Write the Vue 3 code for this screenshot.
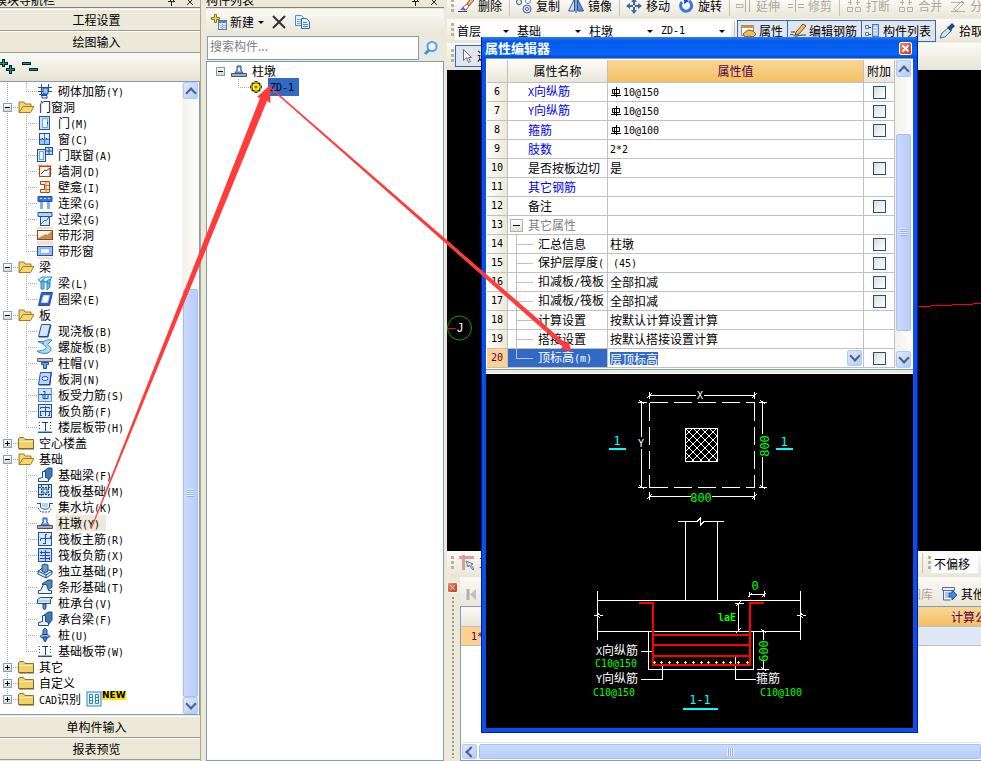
<script setup>
import { h, ref } from 'vue'

/* Splits a label into Chinese and Latin runs so that each gets its own face. */
const Mix = (props) =>
  h(
    'span',
    { class: 'mix' },
    props.t
      .split(/([\x20-\x7e]+)/)
      .filter(Boolean)
      .map((p) => (/^[\x20-\x7e]/.test(p) ? h('span', { class: 'lat' }, p) : p))
  )
Mix.props = ['t']

const B = '#1d4fb0'
const L = '#9cc4f6'
const icons = {
  folderOpen:
    '<path d="M1 13V3h5l1 2h6v3" fill="#f6d67a" stroke="#9a7a2c"/><path d="M1 13.500L5 7.500h11L12.500 13.500z" fill="#fbd568" stroke="#a07c24"/>',
  folder:
    '<path d="M.5 13.500V3.500L1.500 2.500h4l1.500 2h8.500v9z" fill="#f3cf6a" stroke="#8a7434"/><path d="M1.500 6.500h13" stroke="#fff0b8"/><path d="M1 14h15V6" fill="none" stroke="#6b5a20"/>',
  masonry: `<path d="M1 4.500h14M1 8.500h14M4.500 1v10M11.500 1v7M7.500 4v8M4 12.500h6v3M2 11.500h8" stroke="${B}" fill="none"/><path d="M6 5h5v6H6z" fill="${L}" stroke="${B}"/><path d="M5 11v4h5" fill="none" stroke="${B}"/>`,
  door: `<rect x="2.500" y="1.500" width="10" height="13" fill="#cfe3fc" stroke="${B}"/><path d="M5.500 3.500h5v9h-5z" fill="#eef6ff" stroke="#6aa2e8"/><path d="M10 7h1v2h-1z" fill="${B}"/>`,
  window: `<rect x="2.500" y="2.500" width="10" height="11" fill="${L}" stroke="${B}"/><path d="M3 3h9v4H3z" fill="#e4f0ff"/><path d="M7.500 3v10M3 8.500h9" stroke="#3b74d4"/><path d="M5 7h1v1H5zM9 7h1v1H9z" fill="#16408e"/>`,
  doorWindow: `<rect x=".5" y="2.500" width="8" height="12" fill="#d8e9fd" stroke="${B}"/><rect x="2.500" y="4.500" width="4" height="8" fill="#eef6ff" stroke="#6aa2e8"/><rect x="8.500" y=".5" width="7" height="7" fill="#bcd8fa" stroke="${B}"/><path d="M12 1v7M9 4h7" stroke="${B}"/>`,
  wallHole:
    '<path d="M1 2.500h14M1 6.500h14M1 10.500h14M4.500 1v13M10.500 1v13" stroke="#e8a070"/><rect x="2.500" y="3.500" width="11" height="10" fill="#fdf1e4" stroke="#a44a14"/><path d="M4 11l4-4 1 1 4-3v8" fill="#fff" stroke="#6b3210"/>',
  niche:
    '<path d="M3.500 2.500h9v11h-9v-3h4v-5h-4z" fill="#fbe4cc" stroke="#a44a14"/><path d="M9 3v10M8 6.500h4M8 10.500h4" stroke="#d87c3c"/>',
  link: `<path d="M1 1.500h14v5H1z" fill="#3b74d4" stroke="${B}"/><path d="M3 3.500h2M7 3.500h2M11 3.500h2" stroke="#cfe3fc"/><path d="M3 7h3v7H3zM10 7h3v7h-3z" fill="#7fb0f0"/>`,
  lintel: `<path d="M1 1.500h14v4H1z" fill="#b6d4fa" stroke="${B}"/><rect x="3.500" y="5.500" width="9" height="9" fill="#d8e9fd" stroke="${B}"/><path d="M4 13L8 9l1 1 3-4" stroke="#3b74d4" fill="none"/>`,
  stripHole:
    '<path d="M0 1h16M0 15h16" stroke="#f7b8a0"/><rect x=".5" y="3.500" width="15" height="9" fill="#c98a54" stroke="#8a4a1c"/><path d="M1 11L9 7l1 1 5-4H1z" fill="#fdf3e6"/>',
  stripWindow: `<path d="M0 1h16M0 15h16" stroke="#f7b8b0"/><rect x=".5" y="3.500" width="15" height="9" fill="#9cc0f2" stroke="${B}"/><rect x="3.500" y="5.500" width="9" height="5" fill="#eef6ff" stroke="#7fb0f0"/>`,
  beam: '<path d="M1 5l4-3h10l-3 5H4z" fill="#d6f0fc" stroke="#2c84c8"/><path d="M4 7h3v7H4zM10 6l3-2v8l-3 3z" fill="#6cc0ec" stroke="#2c84c8"/><path d="M5 5l8 4M8 3l-5 4" stroke="#2c84c8"/>',
  ring: `<path d="M4.500 1.500h11l-3 13h-11z" fill="#2f62c0" stroke="${B}"/><path d="M6.500 4.500h6l-2 7h-6z" fill="#fff" stroke="#bcd8fa"/>`,
  slab: `<path d="M4.500 1.500h9l-3 12h-9z" fill="#d2e6fe" stroke="${B}"/><path d="M14 2l-3 12H2" stroke="#16408e" fill="none"/>`,
  spiral:
    '<path d="M15 1C10 0 5 2 6 5c1 2 4 2 3 4s-5 3-9 3c5 4 14 3 14-2 0-3-4-3-3-5s3-2 4-4z" fill="#a8dcf8" stroke="#2c84c8"/><path d="M1 2.500h5v2.500z" fill="#d6f0fc" stroke="#2c84c8"/>',
  cap: `<path d="M.5 3.500h15v3H.5z" fill="#c4c8ce" stroke="#5c6470"/><path d="M4.500 7.500h7v2h-2v4h-3v-4h-2z" fill="#6ca4ec" stroke="${B}"/>`,
  slabHole: `<path d="M3.500 1.500h11l-2 12h-11z" fill="#b8d6fc" stroke="${B}"/><path d="M2 14l11 0 1-12" stroke="#16408e" fill="none"/><ellipse cx="8" cy="7.500" rx="3" ry="2" fill="#fff" stroke="${B}"/>`,
  force: `<rect x="1.500" y="1.500" width="13" height="13" fill="#cfe2fc" stroke="#5c8cdc"/><path d="M2 7.500h4M6 4.500h2v8M6 7.500v4h5v-4h3M6 7.500h5" stroke="${B}" fill="none"/>`,
  negative: `<rect x="1.500" y="1.500" width="13" height="13" fill="#d8e9fd" stroke="${B}"/><path d="M8.500 3v10M3.500 6v-1.500h9V6M3 8.500h11M3.500 9v3M12.500 9v3M3 12.500h2M11 12.500h2" stroke="${B}" fill="none"/>`,
  band: `<path d="M1 13.500h14" stroke="${B}"/><path d="M2.500 3v9M13.500 3v9" stroke="${B}" stroke-dasharray="1 2"/><path d="M5 3.500h6M8.500 4v9" stroke="#16408e"/><path d="M1 12h14v1H1z" fill="#8ab6f0"/>`,
  footBeam: `<path d="M6 5l5-4h4v8l-4 5H7z" fill="#3f78b8" stroke="#1b4c84"/><path d="M1.500 14.500v-3l4-1V4.500h3v6l3 1v3z" fill="#e8f2fc" stroke="#1b4c84"/>`,
  raft: `<rect x="1.500" y="1.500" width="13" height="13" fill="#cfe2f8" stroke="#1b4c84"/><path d="M2 4.500h12M2 11.500h12M4.500 2v12M11.500 2v12" stroke="#1b4c84" stroke-dasharray="2 1"/><rect x="6" y="6" width="4" height="4" fill="#fff" stroke="#1b4c84"/>`,
  pit: `<path d="M0 4.500h3M12 4.500h4M3.500 4v4l2 2h5l2-2V4" fill="none" stroke="${B}"/><path d="M5 4h6v4H5z" fill="#b0d0f8"/><path d="M1 9l3 4h8l3-4" fill="none" stroke="${B}" stroke-dasharray="2 1"/>`,
  pier: `<path d="M.5 10.500h15v3H.5z" fill="#a8acb4" stroke="#4c5460"/><path d="M4 10l2-3V3h4v4l2 3z" fill="#8ab6f0" stroke="${B}"/><path d="M7 5h2v3H7z" fill="#fff"/>`,
  raftMain: `<rect x="1.500" y="1.500" width="13" height="13" fill="#d8e9fd" stroke="${B}"/><path d="M8.500 3v10M3.500 10v-2.500h10V5M6 12.500h3M8 3.500h2" stroke="${B}" fill="none"/>`,
  raftNeg: `<rect x="1.500" y="1.500" width="13" height="13" fill="#c4dafa" stroke="${B}"/><path d="M8.500 3v11M3 5.500h10M3 8.500h10M3 11.500h10M4.500 4v3M12.500 10v3" stroke="${B}" fill="none"/>`,
  isolated: `<path d="M1 8l5-3 9 3v3l-6 4-8-4z" fill="#dcebfa" stroke="#1b4c84"/><path d="M5 8V2l3-1 3 1v6L8 10z" fill="#6c9cd0" stroke="#1b4c84"/><path d="M1 8l8 4 6-4M9 12v3" fill="none" stroke="#1b4c84"/>`,
  strip: `<path d="M5 5l6-4h4v7l-4 3z" fill="#4f86c0" stroke="#1b4c84"/><path d="M1.500 14.500v-3h2l3-6h3l2 6h3v3z" fill="#eef5fc" stroke="#1b4c84"/>`,
  pileCap: `<path d="M.5 4.500l3-2h12l-2 2v4H.5z" fill="#dcebfa" stroke="#1b4c84"/><path d="M6 9h3v4l-1.500 2L6 13z" fill="#5a94d8" stroke="#1b4c84"/><path d="M1 6h12" stroke="#8ab6f0"/>`,
  pile: `<path d="M6 3l2-2 2 2v5H6z" fill="#5a94d8" stroke="#1b4c84"/><path d="M3 9.500l2-2h6l2 2-2 1H5z" fill="#8ab6f0" stroke="#1b4c84"/><path d="M6 10h4v2l-2 3-2-3z" fill="#3f78b8" stroke="#1b4c84"/>`,
  // toolbar
  erase: '<path d="M0 13.500h9" stroke="#28406c"/><path d="M5 9l4-3 2 2-3 4H6z" fill="#fff" stroke="#d05030"/><path d="M9 6l4-6 3 2-5 6z" fill="#e8b87c" stroke="#805020"/><path d="M2 12l3-3 3 3z" fill="#3b74d4"/>',
  copy: '<circle cx="3" cy="4" r="2.500" fill="#fff" stroke="#28406c"/><circle cx="12" cy="3" r="2.500" fill="#fff" stroke="#6c84a8"/><circle cx="11" cy="11" r="4" fill="#d0e0f4" stroke="#4c6898"/><circle cx="11" cy="11" r="1.500" fill="#fff" stroke="#4c6898"/>',
  mirror: '<path d="M6.500 1v12h-6z" fill="#cfe2fc" stroke="#28549c"/><path d="M9.500 1v12h6z" fill="#5a94e8" stroke="#28549c"/><path d="M8 0v15" stroke="#28549c"/>',
  move: '<path d="M8 1v14M1 8h14" stroke="#3c68a8" stroke-width="2"/><path d="M8 0l3 4H5zM8 16l3-4H5zM0 8l4-3v6zM16 8l-4-3v6z" fill="#3c68a8"/><path d="M7 7h2v2H7z" fill="#dce8f8"/>',
  rotate: '<path d="M11 3a5.500 5.500 0 1 1-7 1" fill="none" stroke="#3a78dc" stroke-width="3"/><path d="M6 0v6l5-3z" fill="#1d4fb0"/>',
  extend: '<path d="M0 6.500h7v3H0zM9.500 2v12M13.500 2v12" fill="none" stroke="#b4b0a0"/>',
  trim: '<path d="M0 6.500h5M0 9.500h5M10 6.500h6M10 9.500h6M7.500 1v13" fill="none" stroke="#b4b0a0"/>',
  split: '<path d="M1.500 9.500h5v4h-5zM9.500 9.500h5v4h-5zM2 4.500h4M10 4.500h4M4.500 2v5M11.500 2v5" fill="none" stroke="#b4b0a0"/>',
  cut: '<path d="M1 4.500h12M1 13.500h14M4 11l8-8 2 2-8 8z" fill="none" stroke="#b4b0a0"/>',
  prop: '<path d="M1.500 2.500h12v10h-12z" fill="#fff" stroke="#909090"/><path d="M2 3h11v2H2z" fill="#e88830"/><path d="M3 11l5-4 5 1 3 3-3 3-4-1-4 1z" fill="#f0c050" stroke="#805818"/>',
  edit: '<path d="M0 12c4-2 3 2 7 1s5-1 9-1M1 9h4" fill="none" stroke="#303030"/><path d="M6 9l7-8 3 2-7 8-4 1z" fill="#f0c050" stroke="#704818"/>',
  list: '<path d="M1.500 2.500h3v3h-3zM1.500 9.500h3v3h-3z" fill="#fff" stroke="#4c78b8"/><path d="M5 4.500h2M5 11.500h2" stroke="#28406c"/><rect x="8.500" y="1.500" width="6" height="12" fill="#b0ccf4" stroke="#4c78b8"/><path d="M10 4.500h3M10 7.500h3M10 10.500h3" stroke="#fff"/>',
  picker: '<path d="M1 15l2-5 6-5 3 3-6 6z" fill="#d0e4f8" stroke="#3c68a8"/><path d="M8 4l2-1 3-3 3 3-3 3-1 3z" fill="#1b4c84"/>',
  cursor: '<path d="M5.500 1.500v11l3-3 2 5 2-1-2-4h3z" fill="#fff" stroke="#5c6c88"/>',
  ortho: '<path d="M0 2.500h15M4.500 0v15" stroke="#dc9c9c" stroke-width="3"/><path d="M7 6l2 6 1-2 4 5 1-1-3-4 2-1z" fill="#dce8f4" stroke="#5c7ca0"/>',
  first: '<path d="M4 3v11" stroke="#b0b0b0" stroke-width="3"/><path d="M12 3v11L6 8.500z" fill="#c0c0c0"/>',
  other: '<path d="M1.500 1.500h12v3h-12zM2.500 5v9h7" fill="#e8f0fc" stroke="#4c6ca0"/><path d="M4 7h4M4 9h3M4 11h4" stroke="#8098c0"/><path d="M8 7h3V4l5 5-5 5v-3H8z" fill="#4c88dc" stroke="#1d4fb0"/>',
  create: '<path d="M3.500.5h2v3h3v2h-3v3h-2v-3h-3v-2h3z" fill="#f4dc50" stroke="#8c7818"/><rect x="7.500" y="6.500" width="8" height="9" fill="#e8f0fc" stroke="#5078b0"/><path d="M8 7h8v2H8z" fill="#4c84d8"/><path d="M9 11.500h6M9 13.500h6M11.500 10v5" stroke="#98b4dc"/>',
  remove: '<path d="M2 2l12 12M14 2L2 14" stroke="#303038" stroke-width="2"/>',
  duplicate: '<path d="M1.500 1.500h6l2 2v8h-8z" fill="#e4eefc" stroke="#5088cc"/><path d="M3 5.500h4M3 7.500h4M3 9.500h4" stroke="#80a8dc"/><path d="M7.500 4.500h5l3 3v7h-8z" fill="#e4eefc" stroke="#3468b0"/><path d="M9 8.500h4M9 10.500h5M9 12.500h5" stroke="#5088cc"/>',
  search: '<rect width="16" height="16" fill="#dcecfc"/><circle cx="9" cy="6.500" r="4.500" fill="#f4faff" stroke="#5a9cdc" stroke-width="2"/><path d="M6 10l-4 4" stroke="#4c88c8" stroke-width="3"/>',
  gear: '<path d="M8 2v12M2 8h12M4 4l8 8M12 4l-8 8" stroke="#403c00" stroke-width="3"/><circle cx="8" cy="8" r="3.500" fill="#fff000"/><path d="M8 3v10M3 8h10M5 5l6 6M11 5l-6 6" stroke="#fff000"/><circle cx="8" cy="8" r="1" fill="#fff" stroke="#504c00"/>',
  cad: '<rect x="1" y="1" width="14" height="14" fill="#e4f4fc" stroke="#2c84c8"/><path d="M3.500 3.500h3v9h-3zM9.500 3.500h3v9h-3zM3 6.500h4M3 9.500h4M9 6.500h4M9 9.500h4" fill="#fff" stroke="#2c84c8"/>',
  plus: '<path d="M3.500 0v8M0 4.500h8M10.500 6v9M6 10.500h9" stroke="#002828" stroke-width="3"/><path d="M3.500 1v6M0 4.500h7M10.500 7v7M7 10.500h7" stroke="#10a090"/>',
  minus: '<path d="M0 4.500h9M7 10.500h9" stroke="#002828" stroke-width="3"/><path d="M1 4.500h7M8 10.500h7" stroke="#10a090"/>'
}

const groups = [
  { kids: [['砌体加筋(Y)', 'masonry']] },
  { name: '门窗洞', kids: [['门(M)', 'door'], ['窗(C)', 'window'], ['门联窗(A)', 'doorWindow'], ['墙洞(D)', 'wallHole'], ['壁龛(I)', 'niche'], ['连梁(G)', 'link'], ['过梁(G)', 'lintel'], ['带形洞', 'stripHole'], ['带形窗', 'stripWindow']] },
  { name: '梁', kids: [['梁(L)', 'beam'], ['圈梁(E)', 'ring']] },
  { name: '板', kids: [['现浇板(B)', 'slab'], ['螺旋板(B)', 'spiral'], ['柱帽(V)', 'cap'], ['板洞(N)', 'slabHole'], ['板受力筋(S)', 'force'], ['板负筋(F)', 'negative'], ['楼层板带(H)', 'band']] },
  { name: '空心楼盖' },
  { name: '基础', kids: [['基础梁(F)', 'footBeam'], ['筏板基础(M)', 'raft'], ['集水坑(K)', 'pit'], ['柱墩(Y)', 'pier'], ['筏板主筋(R)', 'raftMain'], ['筏板负筋(X)', 'raftNeg'], ['独立基础(P)', 'isolated'], ['条形基础(T)', 'strip'], ['桩承台(V)', 'pileCap'], ['承台梁(F)', 'footBeam'], ['桩(U)', 'pile'], ['基础板带(W)', 'band']] },
  { name: '其它' },
  { name: '自定义' },
  { name: 'CAD识别', isNew: true }
]

const tools = [
  ['删除', 'erase'], null, ['复制', 'copy'], ['镜像', 'mirror'], null, ['移动', 'move'], ['旋转', 'rotate'], null,
  ['延伸', 'extend', 1], ['修剪', 'trim', 1], null, ['打断', 'split', 1], ['合并', 'split', 1], ['分割', 'cut', 1]
]
const combos = ['首层', '基础', '柱墩', 'ZD-1']
const toggles = [['属性', 'prop'], ['编辑钢筋', 'edit'], ['构件列表', 'list']]

const rows = ref([
  { n: 6, name: 'X向纵筋', blue: 1, value: '10@150', rebar: 1, check: 1 },
  { n: 7, name: 'Y向纵筋', blue: 1, value: '10@150', rebar: 1, check: 1 },
  { n: 8, name: '箍筋', blue: 1, value: '10@100', rebar: 1, check: 1 },
  { n: 9, name: '肢数', blue: 1, value: '2*2' },
  { n: 10, name: '是否按板边切', value: '是', check: 1 },
  { n: 11, name: '其它钢筋', blue: 1, value: '' },
  { n: 12, name: '备注', value: '', check: 1 },
  { n: 13, name: '其它属性', group: 1, value: '' },
  { n: 14, name: '汇总信息', sub: 1, value: '柱墩', check: 1 },
  { n: 15, name: '保护层厚度(', sub: 1, value: '(45)', check: 1 },
  { n: 16, name: '扣减板/筏板', sub: 1, value: '全部扣减', check: 1 },
  { n: 17, name: '扣减板/筏板', sub: 1, value: '全部扣减', check: 1 },
  { n: 18, name: '计算设置', sub: 1, value: '按默认计算设置计算' },
  { n: 19, name: '搭接设置', sub: 1, value: '按默认搭接设置计算' },
  { n: 20, name: '顶标高(m)', sub: 1, value: '层顶标高', check: 1, active: 1 }
])
const dots = [653, 660, 668, 676, 684, 692, 700, 707, 715, 722, 729, 737, 746]
</script>

<template>
  <div class="app">
    <nav class="nav">
      <header class="caption caption-nav">
        <span>模块导航栏</span>
        <svg class="pins" width="32" height="8" viewBox="0 0 32 8"><path d="M1 2.500h7M4.500 3v4M3.500 0v2M6.500 0v2M20 6l6-6M20 0l6 6" stroke="#222" fill="none" /></svg>
      </header>
      <button class="section">工程设置</button>
      <button class="section">绘图输入</button>
      <div class="nav-tools">
        <button class="flat" aria-label="展开"><svg width="16" height="16" viewBox="0 0 16 16" v-html="icons.plus" /></button>
        <button class="flat" aria-label="折叠"><svg width="16" height="16" viewBox="0 0 16 16" v-html="icons.minus" /></button>
      </div>
      <div class="tree-frame">
        <div class="tree">
          <template v-for="(g, gi) in groups" :key="gi">
            <div v-if="g.name" class="node">
              <span class="trunk" :class="{ end: gi === groups.length - 1 }"><i class="box" :class="{ closed: !g.kids }"></i></span>
              <svg width="16" height="16" viewBox="0 0 16 16" v-html="g.kids ? icons.folderOpen : icons.folder" />
              <a href="#" class="label"><Mix :t="g.name" /></a>
              <template v-if="g.isNew">
                <svg class="cad" width="16" height="16" viewBox="0 0 16 16" v-html="icons.cad" />
                <b class="new">NEW</b>
              </template>
            </div>
            <div v-for="(k, ki) in g.kids || []" :key="k[0]" class="node">
              <span class="trunk"></span>
              <span class="branch" :class="{ end: ki === g.kids.length - 1 }"></span>
              <svg width="16" height="16" viewBox="0 0 16 16" v-html="icons[k[1]]" />
              <a href="#" class="label" :class="{ chosen: k[1] === 'pier' }"><Mix :t="k[0]" /></a>
            </div>
          </template>
        </div>
        <div class="vscroll">
          <button class="arrow up" aria-label="上"></button>
          <div class="gap-top"></div>
          <div class="thumb"><i></i></div>
          <button class="arrow down" aria-label="下"></button>
        </div>
      </div>
      <button class="section first-bottom">单构件输入</button>
      <button class="section">报表预览</button>
    </nav>

    <section class="list">
      <header class="caption">
        <span>构件列表</span>
        <svg class="pins" width="32" height="8" viewBox="0 0 32 8"><path d="M1 2.500h7M4.500 3v4M3.500 0v2M6.500 0v2M20 6l6-6M20 0l6 6" stroke="#222" fill="none" /></svg>
      </header>
      <div class="list-tools">
        <button class="flat"><svg width="16" height="16" viewBox="0 0 16 16" v-html="icons.create" /><span>新建</span><i class="tri"></i></button>
        <button class="flat" aria-label="删除"><svg width="16" height="16" viewBox="0 0 16 16" v-html="icons.remove" /></button>
        <button class="flat" aria-label="复制"><svg width="16" height="16" viewBox="0 0 16 16" v-html="icons.duplicate" /></button>
      </div>
      <div class="search">
        <input type="text" placeholder="搜索构件..." aria-label="搜索构件" />
        <button class="flat" aria-label="搜索"><svg width="16" height="16" viewBox="0 0 16 16" v-html="icons.search" /></button>
      </div>
      <div class="list-tree">
        <div class="node">
          <i class="box"></i>
          <svg width="16" height="16" viewBox="0 0 16 16" v-html="icons.pier" />
          <a href="#" class="label">柱墩</a>
        </div>
        <div class="node child">
          <span class="branch end"></span>
          <svg width="14" height="14" viewBox="1 1 14 14" v-html="icons.gear" />
          <a href="#" class="label picked"><Mix t="ZD-1" /></a>
        </div>
      </div>
    </section>

    <main class="work">
      <div class="bar bar-edit">
        <i class="grip"></i>
        <template v-for="(t, i) in tools" :key="i">
          <button v-if="t" class="tool" :disabled="!!t[2]"><svg width="16" height="16" viewBox="0 0 16 16" v-html="icons[t[1]]" /><span>{{ t[0] }}</span></button>
          <i v-else class="sep"></i>
        </template>
      </div>
      <div class="bar bar-pick">
        <i class="grip"></i>
        <label v-for="c in combos" :key="c" class="combo"><select :class="{ code: c === 'ZD-1' }" :aria-label="c"><option>{{ c }}</option></select><i class="tri"></i></label>
        <i class="sep"></i>
        <button v-for="t in toggles" :key="t[0]" class="toggle"><svg width="16" height="16" viewBox="0 0 16 16" v-html="icons[t[1]]" /><span>{{ t[0] }}</span></button>
        <button class="tool"><svg width="16" height="16" viewBox="0 0 16 16" v-html="icons.picker" /><span>拾取构件</span></button>
      </div>
      <div class="bar bar-select">
        <i class="grip"></i>
        <button class="toggle"><svg width="16" height="16" viewBox="0 0 16 16" v-html="icons.cursor" /><span>选择</span></button>
      </div>
      <div class="canvas">
        <svg width="534" height="481" viewBox="447 70 534 481" fill="none">
          <circle cx="459.500" cy="328" r="12" stroke="#0a0" />
          <path d="M447 328.500h9M918 306.500h13M931 305.500h21M952 304.500h21M973 303.500h8" stroke="#f00" />
          <text x="457" y="332" class="axis">J</text>
        </svg>
      </div>
      <div class="bar bar-snap">
        <i class="grip"></i>
        <button class="tool"><svg width="16" height="16" viewBox="0 0 16 16" v-html="icons.ortho" /><span>正交</span></button>
        <div class="offset">
          <i class="sep"></i><i class="grip"></i>
          <select aria-label="偏移"><option>不偏移</option></select>
        </div>
      </div>
      <div class="dock">
        <div class="dock-side"><button class="close small" aria-label="关闭"><svg width="9" height="9" viewBox="0 0 9 9"><path d="M2.500 2.500l4 4M6.500 2.500l-4 4" stroke="#fff" stroke-width="1" /></svg></button><i class="dotted"></i></div>
        <div class="dock-main">
          <div class="dock-tools">
            <button class="tool" aria-label="首条" disabled><svg width="16" height="16" viewBox="0 0 16 16" v-html="icons.first" /></button>
            <div class="dock-right">
              <button class="tool" disabled><span>图库</span></button>
              <button class="tool"><svg width="16" height="16" viewBox="0 0 16 16" v-html="icons.other" /><span>其他</span></button>
            </div>
          </div>
          <div class="sheet">
            <table>
              <thead><tr><th class="s-num"></th><th>计算公式</th></tr></thead>
              <tbody><tr><td class="s-num"><Mix t="1*" /></td><td></td></tr></tbody>
            </table>
            <div class="hscroll"><button class="arrow left" aria-label="左"></button><div class="thumb"><i></i></div></div>
          </div>
        </div>
      </div>
    </main>

    <section class="dialog" role="dialog" aria-label="属性编辑器">
      <header class="dialog-title"><h1>属性编辑器</h1><button class="close" aria-label="关闭"><svg width="13" height="13" viewBox="0 0 13 13"><path d="M3.500 3.500l6 6M9.500 3.500l-6 6" stroke="#fff" stroke-width="2" /></svg></button></header>
      <div class="dialog-body">
        <div class="props">
          <table>
            <colgroup><col class="c-num" /><col class="c-name" /><col /><col class="c-add" /></colgroup>
            <thead><tr><th></th><th>属性名称</th><th class="hot">属性值</th><th>附加</th></tr></thead>
            <tbody>
              <tr v-for="r in rows" :key="r.n" :class="{ active: r.active }">
                <th class="num">{{ r.n }}</th>
                <td class="name" :class="{ blue: r.blue, group: r.group, sub: r.sub }">
                  <div><button v-if="r.group" class="fold" aria-label="折叠"></button><i v-if="r.sub" class="limb"></i><Mix :t="r.name" /></div>
                </td>
                <td class="value">
                  <div>
                    <svg v-if="r.rebar" width="10" height="10" viewBox="0 0 10 10"><path d="M1.500 2.500h7v4h-7zM5.500 0v10M3.500 2v6M0 8.500h10" fill="none" stroke="#000" /></svg>
                    <mark v-if="r.active">{{ r.value }}</mark>
                    <Mix v-else :t="r.value" :class="{ inset: r.n === 15 }" />
                    <button v-if="r.active" class="arrow down" aria-label="选择"></button>
                  </div>
                </td>
                <td class="add"><input v-if="r.check" type="checkbox" :aria-label="r.name" /></td>
              </tr>
            </tbody>
          </table>
          <div class="vscroll">
            <button class="arrow up" aria-label="上"></button>
            <div class="gap-top"></div>
            <div class="thumb"><i></i></div>
            <div class="gap-bottom"></div>
            <button class="arrow down" aria-label="下"></button>
          </div>
        </div>
        <svg class="drawing" viewBox="486 375 427 354" fill="none" stroke="#fff">
          <defs>
            <pattern id="hatch" x="685" y="429" width="8" height="8" patternUnits="userSpaceOnUse"><path d="M0 0l8 8M8 0l-8 8" stroke="#fff" /></pattern>
          </defs>
          <g shape-rendering="crispEdges">
            <path d="M649 396.500h47M704 396.500h51M649.500 393v7M754.500 393v7M647 399l5-5M752 399l5-5" />
            <path d="M649.500 403.500h105M649.500 488.500h105M649.500 403.500v85M754.500 403.500v85" stroke-dasharray="18 6" />
            <path d="M641.500 403v35M641.500 450v39M638 403.500h9M638 488.500h9M639 401l5 4M639 486l5 4" />
            <path d="M762.500 403v32M762.500 458v31M759 403.500h8M759 488.500h8M760 401l5 4M760 486l5 4" />
            <path d="M649 497.500h42M712 497.500h43M649.500 493v8M754.500 493v8M647 500l5-5M752 500l5-5" />
            <rect x="685.500" y="429.500" width="32" height="33" fill="url(#hatch)" />
            <path d="M678 522.500h19l3-3v7l4-4h20M685.500 522v79M717.500 522v79M700.500 519v8" />
            <path d="M597 601.500h204M597 632.500h204M597.500 592v49M800.500 592v49M594 616.500h3l3 2M597 614l3 2h3M797 616.500h3l3 2M800 614l3 2h3" />
            <path d="M648.500 632v38.500h105V632M641 652.500h12M641 680.500h21.500V665M735.500 658v22.500H756" />
            <path d="M738.500 604v28M735 604.500h9M736 607l5-5M736 634l5-5M749 595.500h15M749.500 593v5M764.500 592v6M748 598l4-4M762 598l4-4" />
            <path d="M763.500 632v9M763.500 662v8M757 670.500h12M761 630l5 4M761 668l5 4" />
            <path d="M639 604h14v62h97v-62h14M653 636h97M653 646h97M653 657h97" stroke="#f00" stroke-width="2" />
            <path v-for="d in dots" :key="d" :d="`M${d} 663.5h3M${d + 1.5} 662v3`" stroke="#ff0" />
            <path d="M609 450h17M776 450h17M683 710h35" stroke="#0ff" stroke-width="2" />
          </g>
          <g stroke="none">
            <g fill="#0ff" class="big"><text x="617" y="446">1</text><text x="784" y="447">1</text><text x="700" y="705">1-1</text></g>
            <g fill="#fff" class="small-code"><text x="700" y="400">X</text><text x="641" y="448">Y</text></g>
            <g fill="#0f0" class="big">
              <text x="701" y="503">800</text><text x="755" y="591">0</text>
              <text transform="translate(769 447) rotate(-90)">800</text><text transform="translate(768 652) rotate(-90)">600</text>
            </g>
            <g fill="#0f0" class="code"><text class="bold" x="718" y="622">laE</text><text x="595" y="668">C10@150</text><text x="593" y="697">C10@150</text><text x="760" y="697">C10@100</text></g>
            <g fill="#fff" class="cjk"><text x="596" y="656"><tspan class="code">X</tspan>向纵筋</text><text x="596" y="684"><tspan class="code">Y</tspan>向纵筋</text><text x="756" y="684">箍筋</text></g>
          </g>
        </svg>
      </div>
    </section>

    <svg class="callouts" width="981" height="761" viewBox="0 0 981 761" fill="#ff3b3b">
      <path d="M90.500 529L260 98L257 97L270 85L270.500 103L267 101L91.500 529z" />
      <path d="M269 87.500L270 86.500L565.500 343L568.500 341L571.500 351.500L560.500 349L562.500 346.500z" />
    </svg>
  </div>
</template>

<style>
html,
body {
  background: #ece9d8;
}
.mix {
  white-space: pre;
}
.lat {
  font-family: 'DejaVu Sans Mono', monospace;
  font-size: 10px;
}
</style>

<style scoped>
.app,
.app * {
  box-sizing: border-box;
}
.app {
  position: relative;
  display: grid;
  grid-template-columns: 206px 241px minmax(0, 1fr);
  height: 100vh;
  overflow: hidden;
  background: #ece9d8;
  color: #000;
  font: 12px/16px 'Noto Sans CJK SC', sans-serif;
}
button,
input,
select {
  font: inherit;
  color: inherit;
  margin: 0;
  padding: 0;
  border: 0;
  border-radius: 0;
  background: none;
}
a {
  color: inherit;
  text-decoration: none;
}
svg {
  display: block;
  flex: none;
}
i {
  font-style: normal;
}

/* panels */
.caption {
  flex: none;
  display: flex;
  justify-content: space-between;
  align-items: flex-end;
  height: 8px;
  border-bottom: 1px solid #808080;
  line-height: 14px;
  overflow: hidden;
  margin-bottom: 1px;
}
.caption-nav span {
  margin-left: -5px;
}
.pins {
  margin-right: 1px;
}
.nav,
.list {
  display: flex;
  flex-direction: column;
  min-height: 0;
}
.nav {
  margin-right: 5px;
  border-right: 1px solid #aca899;
}
.list {
  margin-right: 3px;
}
.section {
  flex: none;
  height: 22px;
  padding-right: 7px;
  border-top: 1px solid #fff;
  border-bottom: 1px solid #9c9a90;
  background: #ece9d8;
}
.first-bottom {
  margin-top: 1px;
}
.section:last-child {
  margin-bottom: 1px;
}
.nav-tools {
  flex: none;
  display: flex;
  align-items: center;
  gap: 6px;
  height: 28px;
  background: linear-gradient(#fbfaf5, #e6e2d2);
}
.flat {
  display: flex;
  align-items: center;
}
.tree-frame {
  flex: 1;
  display: flex;
  min-height: 0;
  border: 1px solid #7f9db9;
  border-left: 0;
  background: #fff;
}
.tree {
  flex: 1;
  min-width: 0;
  padding-top: 1px;
  overflow: hidden;
}
.node {
  display: flex;
  height: 16px;
  white-space: nowrap;
}
.trunk {
  display: flex;
  align-items: center;
  width: 18px;
  padding-left: 3px;
  background: repeating-linear-gradient(#a8a8a8 0 1px, transparent 1px 2px) 7px 0 / 1px 100% no-repeat;
}
.trunk.end {
  background-size: 1px 8px;
}
.trunk .box::after {
  content: '';
  position: absolute;
  left: 9px;
  top: 3px;
  width: 5px;
  border-top: 1px dotted #a8a8a8;
}
.branch {
  width: 19px;
  background:
    repeating-linear-gradient(#a8a8a8 0 1px, transparent 1px 2px) 8px 0 / 1px 100% no-repeat,
    repeating-linear-gradient(90deg, #a8a8a8 0 1px, transparent 1px 2px) 8px 8px / 11px 1px no-repeat;
}
.branch.end {
  background-size: 1px 8px, 11px 1px;
}
.box {
  position: relative;
  flex: none;
  width: 9px;
  height: 9px;
  border: 1px solid #7f9db9;
  background:
    linear-gradient(#000, #000) 1px 3px / 5px 1px no-repeat,
    linear-gradient(#fff, #d8d4c8);
}
.box.closed {
  background:
    linear-gradient(#000, #000) 1px 3px / 5px 1px no-repeat,
    linear-gradient(#000, #000) 3px 1px / 1px 5px no-repeat,
    linear-gradient(#fff, #d8d4c8);
}
.label {
  margin-left: 3px;
  padding: 0 2px;
}
.label.chosen {
  padding-right: 6px;
  background: #ece9d8;
}
.cad {
  margin-left: 3px;
}
.new {
  align-self: flex-start;
  background: #ffe600;
  font: bold 9px/9px 'DejaVu Sans', sans-serif;
}

/* scroll bars */
.vscroll {
  flex: none;
  display: flex;
  flex-direction: column;
  width: 17px;
  padding: 0 1px;
  background: linear-gradient(90deg, #f2f1ea, #fefefb);
}
.arrow {
  flex: none;
  display: flex;
  align-items: center;
  justify-content: center;
  width: 15px;
  height: 17px;
  border: 1px solid #b4c8f0;
  border-radius: 2px;
  background: linear-gradient(135deg, #dce8fe, #b6ccf8);
}
.arrow::before {
  content: '';
  width: 6px;
  height: 6px;
  border: solid #4d6185;
  border-width: 2px 0 0 2px;
  transform: translateY(2px) rotate(45deg);
}
.arrow.down::before {
  transform: translateY(-2px) rotate(225deg);
}
.arrow.left::before {
  transform: translateX(1px) rotate(-45deg);
}
.thumb {
  display: flex;
  align-items: center;
  justify-content: center;
  border: 1px solid #a8c0f0;
  border-radius: 2px;
  background: linear-gradient(90deg, #cad9fd, #b8cdfa);
}
.vscroll .thumb {
  flex: 407;
}
.gap-top {
  flex: 190;
}
.thumb i {
  width: 7px;
  height: 8px;
  background: repeating-linear-gradient(#eef4fe 0 1px, #8cb0f8 1px 2px);
}

/* component list */
.list-tools {
  flex: none;
  display: flex;
  align-items: center;
  gap: 7px;
  height: 26px;
  padding-left: 5px;
  border-radius: 3px;
  background: linear-gradient(#fbfaf5, #e9e6d8);
}
.list-tools .flat span {
  margin: 0 4px 0 3px;
}
.tri {
  border: 3px solid transparent;
  border-top-color: #000;
  border-bottom: 0;
}
.search {
  flex: none;
  display: flex;
  gap: 4px;
  height: 26px;
  padding: 1px 5px 1px 1px;
}
.search input {
  flex: 1;
  min-width: 0;
  padding: 0 2px 4px;
  border: 1px solid #7f9db9;
  background: #fff;
}
.search input::placeholder {
  color: #808080;
  opacity: 1;
}
.list-tree {
  flex: 1;
  padding-top: 1px;
  border: 1px solid #7f9db9;
  background: #fff;
}
.list-tree .box {
  margin: 4px 6px 0 9px;
}
.list-tree .child {
  align-items: center;
  padding-left: 23px;
}
.list-tree .child .branch {
  align-self: stretch;
}
.label.picked {
  margin-left: 5px;
  padding-right: 5px;
  background: #316ac5;
}

/* workspace */
.work {
  display: flex;
  flex-direction: column;
  min-width: 0;
  min-height: 0;
}
.bar {
  flex: none;
  display: flex;
  align-items: center;
  overflow: hidden;
  padding-left: 1px;
  white-space: nowrap;
  background: linear-gradient(#fbfaf5, #e9e6d8);
}
.bar-edit {
  height: 18px;
  padding-bottom: 6px;
}
.bar-pick {
  height: 23px;
  margin-top: 1px;
}
.bar-select {
  height: 26px;
  margin: 1px 0;
}
.bar-snap {
  height: 26px;
  padding-bottom: 2px;
}
.grip {
  flex: none;
  width: 3px;
  height: 15px;
  margin: 0 1px 0 3px;
  background: repeating-linear-gradient(#b8b4a0 0 3px, transparent 3px 5px);
}
.bar-edit .grip {
  margin-right: 0;
}
.tool {
  flex: none;
  display: flex;
  align-items: center;
  gap: 4px;
  padding: 0 4px;
}
.tool:disabled {
  color: #aca899;
}
.sep {
  flex: none;
  width: 6px;
  height: 20px;
  background: linear-gradient(#c5c2b8, #c5c2b8) 3px 0 / 1px 100% no-repeat;
}
.combo {
  position: relative;
  flex: none;
  width: 72px;
  height: 19px;
  background: #fff;
}
.combo:nth-of-type(1) {
  width: 60px;
}
.combo .tri {
  position: absolute;
  right: 6px;
  top: 9px;
}
select {
  appearance: none;
  display: block;
  width: 100%;
  height: 19px;
  padding-left: 2px;
  line-height: 17px;
}
.code {
  font: 10px/16px 'DejaVu Sans Mono', monospace;
}
.toggle {
  flex: none;
  display: flex;
  align-items: center;
  gap: 3px;
  height: 22px;
  padding: 0 4px 0 2px;
  margin-right: -1px;
  border: 1px solid #316ac5;
  background: #e1e6ee;
}
.canvas {
  flex: none;
  height: 481px;
  overflow: hidden;
  background: #000;
}
.axis {
  fill: #fff;
  font: 12px 'Liberation Sans', sans-serif;
}
.offset {
  flex: none;
  display: flex;
  align-items: center;
  width: 62px;
  margin-left: auto;
}
.offset select {
  width: 46px;
  background: #fff;
}
.dock {
  flex: 1;
  display: flex;
  min-height: 0;
}
.dock-side {
  flex: none;
  display: flex;
  flex-direction: column;
  align-items: center;
  gap: 4px;
  width: 13px;
  padding: 5px 2px 3px 0;
}
.dotted {
  flex: 1;
  width: 2px;
  background: repeating-linear-gradient(#98968c 0 2px, transparent 2px 4px);
}
.close {
  flex: none;
  display: flex;
  align-items: center;
  justify-content: center;
  width: 13px;
  height: 13px;
  border: 1px solid #fff;
  border-radius: 2px;
  background: linear-gradient(135deg, #f08c6c, #c83418);
}
.close.small {
  width: 11px;
  height: 11px;
}
.dock-main {
  flex: 1;
  display: flex;
  flex-direction: column;
  min-width: 0;
}
.dock-tools {
  flex: none;
  display: flex;
  justify-content: space-between;
  height: 29px;
  overflow: hidden;
  padding-top: 4px;
  background: linear-gradient(#fbfaf5, #e9e6d8);
}
.dock-right {
  display: flex;
  justify-content: flex-end;
  margin-right: -8px;
}
.sheet {
  flex: 1;
  display: flex;
  flex-direction: column;
  justify-content: space-between;
  overflow: hidden;
  border: 1px solid #7f9db9;
  border-right: 0;
  background: #fff;
}
table {
  width: 100%;
  border-spacing: 0;
  table-layout: fixed;
}
.sheet table {
  width: calc(100% + 18px);
}
td,
th {
  padding: 0;
  font-weight: normal;
}
.sheet th {
  height: 20px;
  border-bottom: 1px solid #c0c0c0;
  background: linear-gradient(#f9d695, #f3c064);
  color: #500050;
  text-align: right;
  white-space: nowrap;
}
.sheet td {
  height: 19px;
  border-bottom: 1px solid #c0c0c0;
  background: #dfe8f4;
}
.sheet .s-num {
  width: 60px;
}
.sheet th.s-num {
  background: linear-gradient(#fbfaf5, #e9e6d8);
}
.sheet td.s-num {
  padding-left: 10px;
  background: #fdd28c;
  color: #500050;
}
.hscroll {
  display: flex;
  gap: 2px;
  height: 18px;
  padding: 1px 0 1px 1px;
  border-top: 1px solid #ece9d8;
}
.hscroll .arrow {
  height: 15px;
}
.hscroll .thumb {
  flex: 1;
  background: linear-gradient(#cad9fd, #b8cdfa);
}
.hscroll .thumb i {
  background: repeating-linear-gradient(90deg, #eef4fe 0 1px, #8cb0f8 1px 2px);
}

/* property editor window */
.dialog {
  position: absolute;
  left: 481px;
  top: 37px;
  width: 437px;
  padding: 0 4px 4px;
  border: 1px solid #0019a8;
  border-width: 0 1px 1px;
  background: #0a50e8;
}
.dialog-title {
  display: flex;
  align-items: center;
  justify-content: space-between;
  height: 21px;
  margin: 0 -4px;
  padding: 1px 5px 0 3px;
  background: linear-gradient(#2c7cf8, #0458e8 20%, #0668fc 80%, #0848d0);
}
h1 {
  margin: 0;
  color: #fff;
  font-size: 13px;
  line-height: 18px;
  font-weight: bold;
}
.dialog-body {
  background: #ece9d8;
  border-top: 1px solid #7f9db9;
}
.props {
  display: flex;
  padding: 1px 0 1px 1px;
  border-bottom: 1px solid #7f9db9;
  background: #fff;
}
.props table {
  flex: 1;
}
.props .vscroll {
  width: 18px;
  padding-right: 2px;
}
.c-num {
  width: 21px;
}
.c-name {
  width: 100px;
}
.c-add {
  width: 31px;
}
.props th,
.props td {
  height: 19px;
  border: solid #c0c0c0;
  border-width: 0 1px 1px 0;
  white-space: nowrap;
  overflow: hidden;
}
.props thead th {
  height: 23px;
  background: linear-gradient(#fdfcf8, #e9e6d8);
}
.props thead .hot {
  background: linear-gradient(#f9d695, #f3c064);
  color: #500050;
}
.props .num {
  background: linear-gradient(90deg, #fff, #ece9d8);
  font: 10px/16px 'DejaVu Sans Mono', monospace;
}
.props .active .num {
  background: #fdd28c;
  color: #500050;
}
.props td > div {
  display: flex;
  align-items: center;
  height: 18px;
}
.name > div {
  padding-left: 20px;
}
.name.blue {
  color: #0000f0;
}
.name.group {
  color: #808080;
}
.name.group > div,
.name.sub > div {
  padding-left: 2px;
}
.fold {
  width: 13px;
  height: 13px;
  margin-right: 5px;
  border: 1px solid #b0b0b0;
  background:
    linear-gradient(#000, #000) 2px 5px / 7px 1px no-repeat,
    linear-gradient(#fff, #e4e2d8);
}
.limb {
  flex: none;
  width: 17px;
  height: 19px;
  margin: 0 5px 0 6px;
  background:
    linear-gradient(#c0c0c0, #c0c0c0) 0 0 / 1px 100% no-repeat,
    linear-gradient(#c0c0c0, #c0c0c0) 0 9px / 100% 1px no-repeat;
}
.active .limb {
  background-size: 1px 9px, 100% 1px;
}
.active .name {
  background: #316ac5;
  color: #fff;
}
.value > div {
  gap: 2px;
  padding-left: 2px;
}
.value svg {
  margin-left: 1px;
}
.inset {
  margin-left: 3px;
}
mark {
  background: #316ac5;
  color: #fff;
  line-height: 13px;
}
.value .arrow {
  height: 16px;
  margin-left: auto;
  margin-right: 1px;
}
.add input {
  appearance: none;
  display: block;
  width: 13px;
  height: 13px;
  margin: 0 auto;
  border: 1px solid #1c5180;
  background: linear-gradient(135deg, #dcdcd7, #fff);
}
.props .gap-top {
  flex: 57;
}
.props .thumb {
  flex: 196;
}
.props .gap-bottom {
  flex: 20;
}
.drawing {
  width: 100%;
  height: auto;
  margin-top: 3px;
  border-top: 1px solid #fff;
  background: #000;
}
.drawing .big {
  font: 12px 'DejaVu Sans Mono', monospace;
  text-anchor: middle;
}
.drawing .small-code {
  font: 10px 'DejaVu Sans Mono', monospace;
  text-anchor: middle;
}
.drawing .code {
  font: 10px 'DejaVu Sans Mono', monospace;
}
.drawing .bold {
  font-weight: bold;
}
.callouts {
  position: absolute;
  left: 0;
  top: 0;
  pointer-events: none;
}
</style>
